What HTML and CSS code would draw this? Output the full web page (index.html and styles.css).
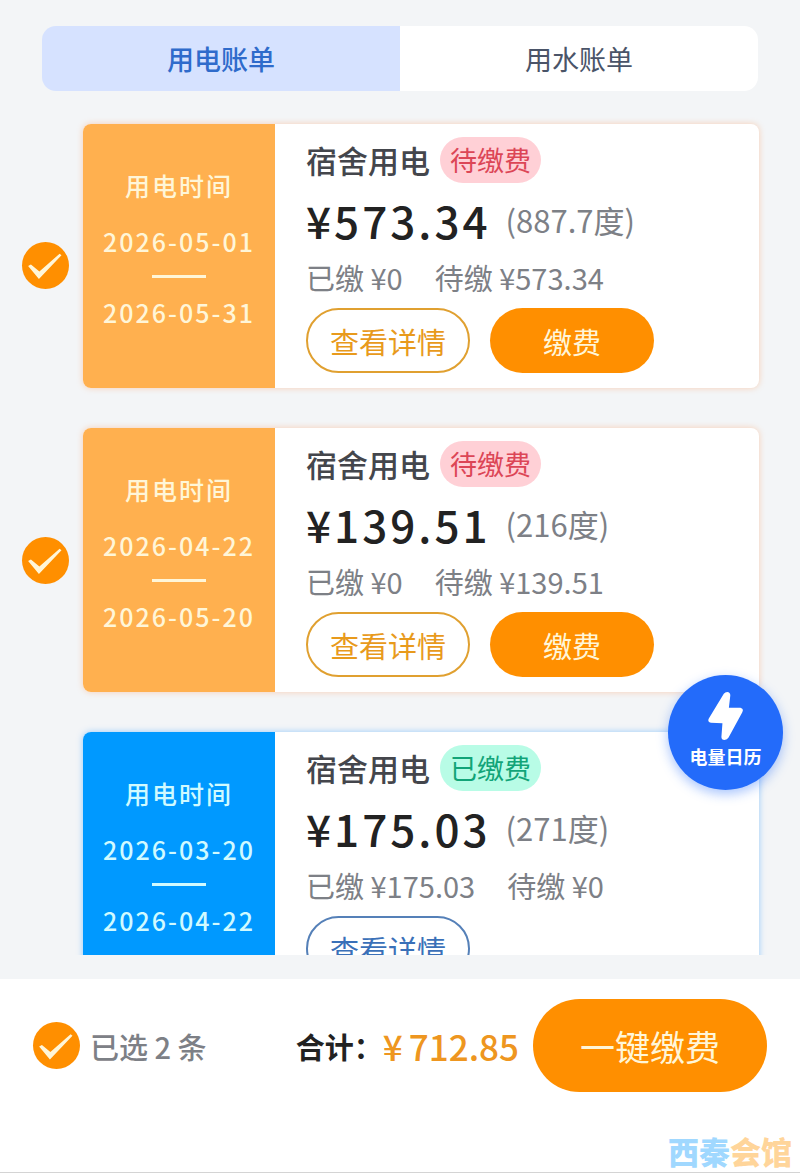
FILE: index.html
```html
<!DOCTYPE html>
<html lang="zh-CN">
<head>
    <meta charset="UTF-8">
    <meta name="viewport" content="width=device-width, initial-scale=1.0">
    <title>用电账单</title>
    <link rel="stylesheet" href="styles.css">
</head>
<body>
    <div class="page">
        <nav class="tabs">
            <button class="tab active">用电账单</button>
            <button class="tab">用水账单</button>
        </nav>

        <main class="bill-list">
            <article class="bill">
                <input type="checkbox" class="check" aria-label="选择 2026-05-01 账单" checked>
                <div class="card">
                    <div class="period">
                        <span>用电时间</span>
                        <time>2026-05-01</time>
                        <i class="dash"></i>
                        <time>2026-05-31</time>
                    </div>
                    <div class="info">
                        <div class="title-row">
                            <h2>宿舍用电</h2>
                            <span class="badge">待缴费</span>
                        </div>
                        <div class="amount-row">
                            <strong>¥573.34</strong>
                            <span>(887.7度)</span>
                        </div>
                        <div class="paid-row">
                            <span>已缴 ¥0</span>
                            <span>待缴 ¥573.34</span>
                        </div>
                        <div class="actions">
                            <button class="btn btn-outline">查看详情</button>
                            <button class="btn btn-fill">缴费</button>
                        </div>
                    </div>
                </div>
            </article>

            <article class="bill">
                <input type="checkbox" class="check" aria-label="选择 2026-04-22 账单" checked>
                <div class="card">
                    <div class="period">
                        <span>用电时间</span>
                        <time>2026-04-22</time>
                        <i class="dash"></i>
                        <time>2026-05-20</time>
                    </div>
                    <div class="info">
                        <div class="title-row">
                            <h2>宿舍用电</h2>
                            <span class="badge">待缴费</span>
                        </div>
                        <div class="amount-row">
                            <strong>¥139.51</strong>
                            <span>(216度)</span>
                        </div>
                        <div class="paid-row">
                            <span>已缴 ¥0</span>
                            <span>待缴 ¥139.51</span>
                        </div>
                        <div class="actions">
                            <button class="btn btn-outline">查看详情</button>
                            <button class="btn btn-fill">缴费</button>
                        </div>
                    </div>
                </div>
            </article>

            <!-- 已缴费的账单不可勾选 -->
            <article class="bill paid">
                <div class="card">
                    <div class="period">
                        <span>用电时间</span>
                        <time>2026-03-20</time>
                        <i class="dash"></i>
                        <time>2026-04-22</time>
                    </div>
                    <div class="info">
                        <div class="title-row">
                            <h2>宿舍用电</h2>
                            <span class="badge">已缴费</span>
                        </div>
                        <div class="amount-row">
                            <strong>¥175.03</strong>
                            <span>(271度)</span>
                        </div>
                        <div class="paid-row">
                            <span>已缴 ¥175.03</span>
                            <span>待缴 ¥0</span>
                        </div>
                        <div class="actions">
                            <button class="btn btn-outline">查看详情</button>
                        </div>
                    </div>
                </div>
            </article>
        </main>

        <footer class="footer">
            <div class="pay-bar">
                <label class="selected">
                    <input type="checkbox" class="check" checked>
                    <span>已选 2 条</span>
                </label>
                <div class="total">
                    <span>合计：</span>
                    <strong><span>¥</span><span>712.85</span></strong>
                </div>
                <button class="pay-all">一键缴费</button>
            </div>
        </footer>

        <button class="fab">
            <svg viewBox="0 0 102 141" aria-hidden="true">
                <path d="M46 5 Q50 0 56 0 Q66 1 65 11 L61 46 L95 46 Q106 49 100 60 L60 134 Q56 141 48 141 Q39 140 39 132 L42 92 L8 90 Q-3 88 2 78 Z"/>
            </svg>
            <span>电量日历</span>
        </button>
        <div class="watermark">西秦<span>会馆</span></div>
    </div>
</body>
</html>
```

FILE: styles.css
```css
:root {
    --bg: #f3f5f7;
    --orange: #ff8f00;
    --orange-light: #ffb04f;
    --cream: #fff6d8;
    --blue: #0099ff;
    --gray: #7d8086;
}

* {
    box-sizing: border-box;
}
body {
    margin: 0;
    background-color: var(--bg);
    font-family: "Noto Sans CJK SC", sans-serif;
    color: #222;
}
h2 {
    margin: 0;
}
button {
    font-family: inherit;
    border: none;
    padding: 0;
    cursor: pointer;
}
.page {
    position: relative;
    display: flex;
    flex-direction: column;
    height: 100vh;
}

/* Tabs */
.tabs {
    display: flex;
    flex: none;
    margin: 26px 42px 0;
    border-radius: 14px;
    overflow: hidden;
}
.tab {
    flex: 1;
    height: 65px;
    background-color: #fff;
    color: #4a5468;
    font-size: 27px;
}
.tab.active {
    background-color: #d6e2ff;
    color: #2f6bcb;
    font-weight: 500;
}

/* Bills */
.bill-list {
    flex: 1;
    min-height: 0;
    display: flex;
    flex-direction: column;
    gap: 40px;
    margin-bottom: 24px;
    padding: 33px 41px 0 22px;
    overflow-y: auto;
    scrollbar-width: none;
}
.bill {
    flex: none;
    display: grid;
    grid-template-columns: 47px 1fr;
    column-gap: 14px;
    align-items: center;
}
.bill:first-child .check {
    margin-top: 18px;
}
.check {
    appearance: none;
    flex: none;
    width: 47px;
    height: 47px;
    margin: 0;
    border-radius: 50%;
    border: 2px solid #ccc;
    cursor: pointer;
}
.check:checked {
    border: none;
    background-color: var(--orange);
}
.check:checked::before {
    content: "";
    display: block;
    height: 100%;
    background-color: var(--cream);
    clip-path: polygon(13% 52%, 19% 49%, 37% 64%, 80% 26%, 84% 29%, 36% 80%);
}
.card {
    grid-column: 2;
    display: flex;
    border-radius: 8px;
    background-color: #fff;
    box-shadow: 0 0 6px rgba(255, 150, 80, 0.4);
}
.period {
    flex: none;
    width: 192px;
    padding-top: 43px;
    display: flex;
    flex-direction: column;
    align-items: center;
    border-radius: 8px 0 0 8px;
    background-color: var(--orange-light);
    color: var(--cream);
    font-size: 25px;
    font-weight: 500;
    line-height: 36px;
    letter-spacing: 2px;
}
.period span {
    margin-bottom: 20px;
}
.dash {
    width: 54px;
    height: 3px;
    margin: 16px 0;
    background-color: var(--cream);
}
.info {
    flex: 1;
    padding: 13px 16px 15px 31px;
}
.title-row {
    display: flex;
    align-items: center;
    gap: 10px;
    height: 46px;
}
.title-row h2 {
    color: #44464c;
    font-size: 31px;
    font-weight: 500;
    line-height: 44px;
}
.badge {
    padding: 0 10px;
    border-radius: 23px;
    background-color: #ffd0d6;
    color: #dc4656;
    font-size: 27px;
    line-height: 46px;
}
.amount-row {
    display: flex;
    align-items: center;
    gap: 15px;
    line-height: 74px;
}
.amount-row strong {
    font-size: 44px;
    font-weight: 500;
    letter-spacing: 3px;
}
.amount-row span {
    color: var(--gray);
    font-size: 31px;
}
.paid-row {
    display: flex;
    gap: 32px;
    color: var(--gray);
    font-size: 29px;
    line-height: 40px;
}
.actions {
    display: flex;
    gap: 20px;
    margin-top: 11px;
}
.btn {
    width: 164px;
    height: 65px;
    border-radius: 33px;
    font-size: 29px;
}
.btn-outline {
    border: 2px solid #e0a030;
    background-color: #fff;
    color: #e89a1c;
}
.btn-fill {
    background-color: var(--orange);
    color: var(--cream);
}

.paid .card {
    box-shadow: 0 0 6px rgba(60, 160, 255, 0.5);
}
.paid .period {
    background-color: var(--blue);
    color: #d0faff;
}
.paid .dash {
    background-color: #d0faff;
}
.paid .badge {
    background-color: #b8fce6;
    color: #12a478;
}
.paid .btn-outline {
    border-color: #5580b8;
    color: #3a70b8;
}

/* Footer */
.footer {
    flex: none;
    height: 194px;
    padding: 20px 33px 0;
    background-color: #fff;
    border-bottom: 1px solid #d4d4d4;
}
.pay-bar {
    display: flex;
    align-items: center;
}
.selected {
    display: flex;
    align-items: center;
    gap: 10px;
    color: var(--gray);
    font-size: 29px;
    font-weight: 500;
}
.total {
    display: flex;
    align-items: center;
    margin-left: auto;
    font-size: 29px;
    font-weight: 700;
}
.total strong {
    display: flex;
    gap: 6px;
    color: #ee9620;
    font-size: 35px;
    font-weight: 500;
}
.pay-all {
    width: 234px;
    height: 93px;
    margin-left: 14px;
    border-radius: 47px;
    background-color: var(--orange);
    color: var(--cream);
    font-size: 35px;
}

.fab {
    position: absolute;
    right: 17px;
    bottom: 383px;
    display: flex;
    flex-direction: column;
    align-items: center;
    width: 115px;
    height: 115px;
    padding-top: 17px;
    border-radius: 50%;
    background-color: #236bfa;
    box-shadow: 0 4px 12px rgba(35, 107, 250, 0.4);
    color: #fff;
    font-size: 18px;
    font-weight: 700;
    line-height: 32px;
}
.fab svg {
    width: 35px;
    height: 48px;
    fill: #fff;
}
.watermark {
    position: absolute;
    right: 8px;
    bottom: 4px;
    color: #a0d8ff;
    font-size: 31px;
    font-weight: 900;
    line-height: 36px;
}
.watermark span {
    color: #ffd59a;
}
```
